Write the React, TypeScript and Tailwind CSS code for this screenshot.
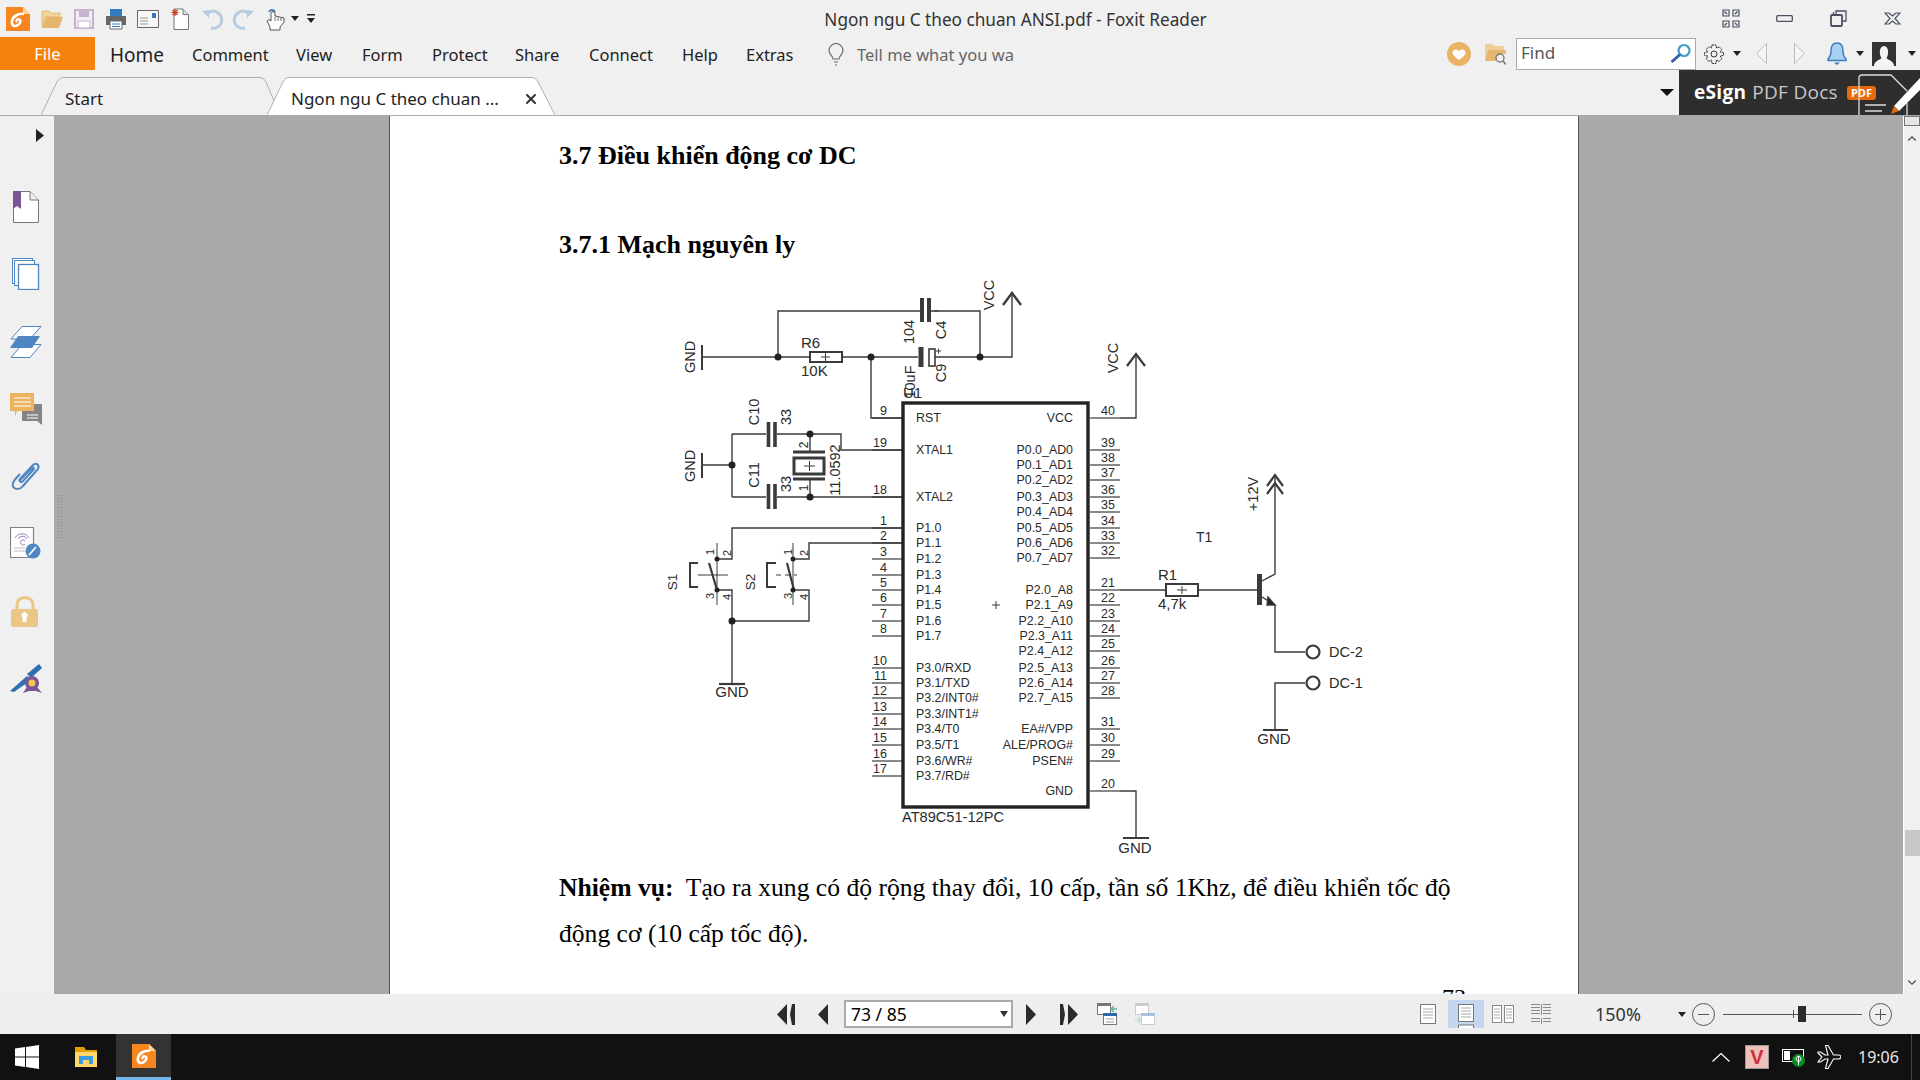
import { X } from "lucide-react";

type IconProps = { className?: string };

const leftPins: [string, string, number][] = [
  ["RST", "9", 418], ["XTAL1", "19", 450], ["XTAL2", "18", 497],
  ["P1.0", "1", 528], ["P1.1", "2", 543], ["P1.2", "3", 559], ["P1.3", "4", 575],
  ["P1.4", "5", 590], ["P1.5", "6", 605], ["P1.6", "7", 621], ["P1.7", "8", 636],
  ["P3.0/RXD", "10", 668], ["P3.1/TXD", "11", 683], ["P3.2/INT0#", "12", 698], ["P3.3/INT1#", "13", 714],
  ["P3.4/T0", "14", 729], ["P3.5/T1", "15", 745], ["P3.6/WR#", "16", 761], ["P3.7/RD#", "17", 776],
];

const rightPins: [string, string, number][] = [
  ["VCC", "40", 418],
  ["P0.0_AD0", "39", 450], ["P0.1_AD1", "38", 465], ["P0.2_AD2", "37", 480], ["P0.3_AD3", "36", 497],
  ["P0.4_AD4", "35", 512], ["P0.5_AD5", "34", 528], ["P0.6_AD6", "33", 543], ["P0.7_AD7", "32", 558],
  ["P2.0_A8", "21", 590], ["P2.1_A9", "22", 605], ["P2.2_A10", "23", 621], ["P2.3_A11", "24", 636],
  ["P2.4_A12", "25", 651], ["P2.5_A13", "26", 668], ["P2.6_A14", "27", 683], ["P2.7_A15", "28", 698],
  ["EA#/VPP", "31", 729], ["ALE/PROG#", "30", 745], ["PSEN#", "29", 761], ["GND", "20", 791],
];

function Rot({ x, y, size = 13, children }: { x: number; y: number; size?: number; children: string }) {
  return (
    <text transform={`translate(${x} ${y}) rotate(-90)`} y={4.5} textAnchor="middle" fontSize={size} fill="#2a2a2a" stroke="none">
      {children}
    </text>
  );
}

function Label({ x, y, size = 13, anchor = "start", children }: { x: number; y: number; size?: number; anchor?: "start" | "middle" | "end"; children: string }) {
  return (
    <text x={x} y={y} textAnchor={anchor} fontSize={size} fill="#2a2a2a" stroke="none">
      {children}
    </text>
  );
}

function Schematic() {
  return (
    <svg viewBox="390 270 1188 590" className="block w-[1188px] h-[590px] [font-family:'Liberation_Sans',Arial,sans-serif]" fill="none" stroke="#3a3a3a" strokeWidth={1.4}>
      {/* reset network */}
      <path d="M702 357H810M842 357H918M935 357H1012V294M778 357V311H920M931 311H980V357M871 357V418H902" />
      <path d="M702 345V370" strokeWidth={2} />
      <path d="M1003 305L1012 293L1021 305" strokeWidth={2.4} />
      <rect x={810} y={352} width={32} height={10} fill="#fff" strokeWidth={2} />
      <path d="M821 357h9M825.5 353v8" strokeWidth={1} />
      <path d="M922 298V322M929 298V322" strokeWidth={4} />
      <path d="M921 347V367" strokeWidth={5} />
      <rect x={929} y={349} width={6} height={17} fill="#fff" strokeWidth={1.6} />
      <path d="M936 351h5M938.5 348.5v5M934 311h5" strokeWidth={1} />
      <circle cx={778} cy={357} r={3.5} fill="#222" stroke="none" />
      <circle cx={871} cy={357} r={3.5} fill="#222" stroke="none" />
      <circle cx={980} cy={357} r={3.5} fill="#222" stroke="none" />

      {/* crystal network */}
      <path d="M702 465H732M732 434V497M732 434H766M777 434H841V450H902M732 497H766M777 497H902M810 434V452M810 479V497" />
      <path d="M702 453V478" strokeWidth={2} />
      <path d="M768.5 422V447M775 422V447M768.5 484V509M775 484V509" strokeWidth={3.6} />
      <path d="M793 452H825M793 479H825" strokeWidth={3} />
      <rect x={794} y={458} width={30} height={16} fill="#fff" strokeWidth={3} />
      <path d="M804 466h11M809.5 461v10" strokeWidth={1} />
      <circle cx={732} cy={465} r={3.5} fill="#222" stroke="none" />
      <circle cx={810} cy={434} r={3.5} fill="#222" stroke="none" />
      <circle cx={810} cy={497} r={3.5} fill="#222" stroke="none" />

      {/* switches */}
      <path d="M902 528H732V559H717M902 543H809V559H793M717 590H732V683M793 590H809V621H732" />
      <path d="M717 543V605M793 543V605" strokeWidth={1} />
      <path d="M709 563L717 590M787 563L794 590" strokeWidth={2.2} />
      <path d="M698 563H690V587H698M776 563H767V587H776" strokeWidth={2} />
      <path d="M698 575H728" strokeWidth={1} />
      <path d="M776 575H797" strokeWidth={1} strokeDasharray="5 4" />
      <circle cx={717} cy={559} r={2.5} fill="#222" stroke="none" />
      <circle cx={717} cy={590} r={2.5} fill="#222" stroke="none" />
      <circle cx={793} cy={559} r={2.5} fill="#222" stroke="none" />
      <circle cx={793} cy={590} r={2.5} fill="#222" stroke="none" />
      <circle cx={732} cy={621} r={3.5} fill="#222" stroke="none" />
      <path d="M719 684H745" strokeWidth={2.2} />

      {/* chip and pins */}
      <rect x={903} y={403} width={185} height={404} strokeWidth={3.4} fill="#fff" stroke="#222" />
      {leftPins.map(([name, num, y]) => (
        <g key={num}>
          <path d={`M872 ${y}H902`} strokeWidth={1.2} />
          <Label x={916} y={y + 4} size={12.4}>{name}</Label>
          <Label x={887} y={y - 3} size={12.5} anchor="end">{num}</Label>
        </g>
      ))}
      {rightPins.map(([name, num, y]) => (
        <g key={num}>
          <path d={`M1090 ${y}H1120`} strokeWidth={1.2} />
          <Label x={1073} y={y + 4} size={12.4} anchor="end">{name}</Label>
          <Label x={1108} y={y - 3} size={12.5} anchor="middle">{num}</Label>
        </g>
      ))}
      <path d="M992 605h8M996 601v8" strokeWidth={1} />
      <path d="M1120 418H1136V354M1120 791H1136V838M1120 590H1166M1198 590H1257" />
      <path d="M1127 366L1136 354L1145 366M1123 838H1149M1263 730H1288" strokeWidth={2.2} />

      {/* driver stage */}
      <rect x={1166} y={584} width={32} height={12} fill="#fff" strokeWidth={2} />
      <path d="M1177 590h10M1182 586v8" strokeWidth={1} />
      <path d="M1259.5 574V605" strokeWidth={5} />
      <path d="M1262 581L1275 574V474M1262 597L1275 605V652H1305M1305 683H1275V730" />
      <path d="M1267 486L1275 475L1283 486M1267 494L1275 483L1283 494" strokeWidth={2.2} />
      <path d="M1268 597L1275 605H1267Z" fill="#222" />
      <circle cx={1313} cy={652} r={6.5} strokeWidth={2.2} fill="#fff" />
      <circle cx={1313} cy={683} r={6.5} strokeWidth={2.2} fill="#fff" />

      {/* labels */}
      <Rot x={690} y={357} size={14.5}>GND</Rot>
      <Rot x={690} y={466} size={14.5}>GND</Rot>
      <Label x={801} y={348} size={15}>R6</Label>
      <Label x={801} y={376} size={15}>10K</Label>
      <Rot x={909} y={332} size={14.5}>104</Rot>
      <Rot x={941} y={330} size={14.5}>C4</Rot>
      <Rot x={941} y={373} size={14.5}>C9</Rot>
      <Rot x={910} y={382} size={14.5}>10uF</Rot>
      <Label x={903} y={398} size={15}>U1</Label>
      <Rot x={989} y={295} size={14.5}>VCC</Rot>
      <Rot x={1113} y={358} size={14.5}>VCC</Rot>
      <Rot x={754} y={412} size={14.5}>C10</Rot>
      <Rot x={786} y={417} size={14.5}>33</Rot>
      <Rot x={754} y={475} size={14.5}>C11</Rot>
      <Rot x={786} y={484} size={14.5}>33</Rot>
      <Rot x={835} y={470} size={14.5}>11.0592</Rot>
      <Rot x={803} y={445} size={12}>2</Rot>
      <Rot x={803} y={488} size={12}>1</Rot>
      <Rot x={672} y={582} size={13.5}>S1</Rot>
      <Rot x={750} y={582} size={13.5}>S2</Rot>
      <Rot x={709} y={552} size={11}>1</Rot>
      <Rot x={726} y={553} size={11}>2</Rot>
      <Rot x={709} y={596} size={11}>3</Rot>
      <Rot x={726} y={597} size={11}>4</Rot>
      <Rot x={787} y={552} size={11}>1</Rot>
      <Rot x={803} y={553} size={11}>2</Rot>
      <Rot x={787} y={596} size={11}>3</Rot>
      <Rot x={803} y={597} size={11}>4</Rot>
      <Label x={732} y={697} size={15} anchor="middle">GND</Label>
      <Label x={1135} y={853} size={15} anchor="middle">GND</Label>
      <Label x={1274} y={744} size={15} anchor="middle">GND</Label>
      <Label x={902} y={822} size={14.6}>AT89C51-12PC</Label>
      <Rot x={1253} y={494} size={14.5}>+12V</Rot>
      <Label x={1196} y={542} size={14}>T1</Label>
      <Label x={1158} y={580} size={15}>R1</Label>
      <Label x={1158} y={609} size={15}>4,7k</Label>
      <Label x={1329} y={657} size={14.5}>DC-2</Label>
      <Label x={1329} y={688} size={14.5}>DC-1</Label>
    </svg>
  );
}

function Caret({ className = "" }: IconProps) {
  return (
    <svg viewBox="0 0 8 5" className={className}>
      <path d="M0 0H8L4 5Z" fill="#222" />
    </svg>
  );
}

function FoxitLogo({ className = "" }: IconProps) {
  return (
    <svg viewBox="0 0 24 24" className={className}>
      <path d="M0 0H17L24 7V24H0Z" fill="#f6861f" />
      <path d="M17 0L24 7H17Z" fill="#fbd3a0" />
      <path d="M18 7C13 6 7 9 6 14C5 19 9 20 12 18C15 16 15 13 13 12.5C11 12 10 14 11 15" fill="none" stroke="#fff" strokeWidth={2.6} />
    </svg>
  );
}

function FolderIcon({ className = "" }: IconProps) {
  return (
    <svg viewBox="0 0 22 20" className={className}>
      <path d="M1 2H8L10 4H19V8H4L1 18Z" fill="#f2d49b" stroke="#dfb36a" strokeWidth={0.8} />
      <path d="M5 8H22L18 19H1Z" fill="#e6b66c" />
    </svg>
  );
}

function TopLeftIcons() {
  return (
    <div className="flex items-center">
      <FoxitLogo className="ml-[6px] w-[24px] h-[24px]" />
      <FolderIcon className="ml-[11px] w-[22px] h-[20px]" />
      <svg viewBox="0 0 20 20" className="ml-[11px] w-[20px] h-[20px]">
        <path d="M1 1H19V19H1Z" fill="#f3edf6" stroke="#c5b3d0" strokeWidth={2} />
        <path d="M5 1H15V8H5Z" fill="#c5b3d0" />
        <path d="M4 12H16V19H4Z" fill="#fff" stroke="#c5b3d0" />
      </svg>
      <svg viewBox="0 0 22 22" className="ml-[11px] w-[22px] h-[22px]">
        <path d="M5 1H17V8H5Z" fill="#2f7cc0" />
        <path d="M1 8H21V17H1Z" fill="#666" />
        <path d="M5 13H17V21H5Z" fill="#fff" stroke="#666" />
        <path d="M7 16H15M7 18.5H15" stroke="#2f7cc0" />
      </svg>
      <svg viewBox="0 0 22 20" className="ml-[10px] w-[22px] h-[20px]">
        <path d="M.5 1.5H21.5V18.5H.5Z" fill="#f7f7f7" stroke="#666" />
        <path d="M15 4H19V9H15Z" fill="#3b78b8" />
        <path d="M3 9H11M3 12H11M3 15H11" stroke="#999" />
      </svg>
      <svg viewBox="0 0 18 22" className="ml-[12px] w-[18px] h-[22px]">
        <path d="M3 1H12L17.5 6.5V21.5H3Z" fill="#fff" stroke="#777" />
        <path d="M12 1V6.5H17.5" fill="#ddd" stroke="#777" />
        <path d="M4 1V8M.5 4.5H7.5M1.5 2L6.5 7M6.5 2L1.5 7" stroke="#d2402a" strokeWidth={1.2} />
      </svg>
      <svg viewBox="0 0 23 22" className="ml-[12px] w-[23px] h-[22px]" fill="none">
        <path d="M6 6A8.5 8.5 0 1 1 10 20" stroke="#b6cbe0" strokeWidth={3} />
        <path d="M1 3L8 2V10Z" fill="#b6cbe0" />
      </svg>
      <svg viewBox="0 0 23 22" className="ml-[8px] w-[23px] h-[22px]" fill="none">
        <path d="M17 6A8.5 8.5 0 1 0 13 20" stroke="#b6cbe0" strokeWidth={3} />
        <path d="M22 3L15 2V10Z" fill="#b6cbe0" />
      </svg>
      <svg viewBox="0 0 20 24" className="ml-[11px] w-[20px] h-[24px]" fill="none">
        <path d="M3 5A3.2 3.2 0 0 1 9 5" stroke="#2f6fb0" strokeWidth={1.6} />
        <path d="M5 6V14L3 12.5L1 14L4 20V23H14V20L18 15V11L9 9V6C9 4.5 5 4.5 5 6Z" fill="#fff" stroke="#444" strokeWidth={0.9} />
        <path d="M9 10V14M12 10.5V14M15 11V14" stroke="#444" strokeWidth={0.8} />
      </svg>
      <Caret className="ml-[5px] w-[8px] h-[5px]" />
      <svg viewBox="0 0 8 9" className="ml-[8px] w-[8px] h-[9px]">
        <path d="M0 0H8V1.5H0ZM0 4H8L4 9Z" fill="#222" />
      </svg>
    </div>
  );
}

function WindowButtons() {
  return (
    <div className="flex items-center pr-[19px]">
      <svg viewBox="0 0 18 19" className="w-[18px] h-[19px]" fill="none" stroke="#4a5160" strokeWidth={1.2}>
        <path d="M1 1H7V7H1ZM11 1H17V7H11ZM1 12H7V18H1ZM11 12H17V18H11Z" />
        <path d="M2.5 2.5L5 5M15.5 2.5L13 5M2.5 16.5L5 14M15.5 16.5L13 14" strokeWidth={1.4} />
      </svg>
      <svg viewBox="0 0 17 7" className="ml-[36px] w-[17px] h-[7px]" fill="none" stroke="#4a5160" strokeWidth={1.3}>
        <rect x={0.7} y={0.7} width={15.6} height={5.6} rx={1} />
      </svg>
      <svg viewBox="0 0 17 17" className="ml-[37px] w-[17px] h-[17px]" fill="none" stroke="#4a5160" strokeWidth={1.3}>
        <path d="M6 4V1H16V11H13" />
        <path d="M3.5 4V2" />
        <rect x={1} y={5} width={11} height={11} rx={1} strokeWidth={1.8} />
      </svg>
      <svg viewBox="0 0 17 13" className="ml-[37px] w-[17px] h-[13px]" fill="none" stroke="#4a5160" strokeWidth={1.2}>
        <path d="M1 1H5L8.5 4L12 1H16L11 6.5L16 12H12L8.5 9L5 12H1L6 6.5Z" />
      </svg>
    </div>
  );
}

function MenuRight() {
  return (
    <div className="flex items-center">
      <svg viewBox="0 0 24 24" className="w-[24px] h-[24px]">
        <circle cx={12} cy={12} r={12} fill="#e9b264" />
        <path d="M12 18C8 15 5.5 13 5.5 10.5C5.5 7 10 6.5 12 9C14 6.5 18.5 7 18.5 10.5C18.5 13 16 15 12 18Z" fill="#fff" />
      </svg>
      <svg viewBox="0 0 21 22" className="ml-[14px] w-[21px] h-[22px]" fill="none">
        <path d="M0 1H7L9 3H19V7H3L0 16Z" fill="#efcf98" />
        <path d="M3 7H21V11C15 9 11 13 11 18H0Z" fill="#e6b66c" />
        <circle cx={15} cy={15} r={4} stroke="#777" strokeWidth={1.3} />
        <path d="M18 18L21 21.5" stroke="#777" strokeWidth={1.6} />
      </svg>
      <div className="ml-[10px] w-[180px] h-[32px] flex items-center justify-between bg-white border border-[#aaaaaa] pl-[4px] pr-[3px] pb-[2px] text-[17px] text-[#555]">
        <span>Find</span>
        <svg viewBox="0 0 22 20" className="w-[22px] h-[20px]" fill="none">
          <circle cx={14} cy={7.5} r={5.5} stroke="#3d9ec9" strokeWidth={2.2} />
          <path d="M10 11.5L1.5 19" stroke="#2f5f9e" strokeWidth={2.8} />
        </svg>
      </div>
      <svg viewBox="0 0 20 20" className="ml-[8px] w-[20px] h-[20px]" fill="none" stroke="#333" strokeWidth={1}>
        <path d="M8 1H12L12.6 4L15.2 2.8L17.8 5.5L16.2 8L19.5 8.5V11.5L16.2 12L17.8 14.8L15 17.5L12.5 16L12 19.5H8L7.5 16L5 17.5L2.2 14.8L3.8 12L.5 11.5V8.5L3.8 8L2.2 5.5L4.8 2.8L7.4 4Z" strokeDasharray="2 .6" />
        <circle cx={10} cy={10} r={3} />
      </svg>
      <Caret className="ml-[9px] w-[8px] h-[5px]" />
      <svg viewBox="0 0 11 21" className="ml-[15px] w-[11px] h-[21px]" fill="#f4f4f4" stroke="#bdbdbd">
        <path d="M10.5 .5V20.5L.5 10.5Z" />
      </svg>
      <svg viewBox="0 0 11 21" className="ml-[27px] w-[11px] h-[21px]" fill="#f4f4f4" stroke="#bdbdbd">
        <path d="M.5 .5V20.5L10.5 10.5Z" />
      </svg>
      <svg viewBox="0 0 20 23" className="ml-[22px] w-[20px] h-[23px]">
        <path d="M10 1C5.5 1 4 5 4 9C4 13 3 15 1 17V18.5H19V17C17 15 16 13 16 9C16 5 14.5 1 10 1Z" fill="#a9d0f0" stroke="#3a7cc0" strokeWidth={1.4} />
        <path d="M7 20.5H13L10 23Z" fill="#3a7cc0" />
      </svg>
      <Caret className="ml-[9px] w-[8px] h-[5px]" />
      <svg viewBox="0 0 24 24" className="ml-[8px] w-[24px] h-[24px]">
        <rect width={24} height={24} fill="#333" />
        <path d="M2 24C2 19 8 18 9.5 16C7 13 7 4 12 4C17 4 17 13 14.5 16C16 18 22 19 22 24Z" fill="#f4f4f4" />
      </svg>
      <Caret className="ml-[12px] mr-[4px] w-[8px] h-[5px]" />
    </div>
  );
}

function Tabs() {
  return (
    <div className="flex items-end h-full text-[17px]">
      <div className="relative ml-[41px] w-[233px] h-[38px] flex items-center pl-[24px] pt-[5px] text-[#222]">
        <svg viewBox="0 0 233 38" className="absolute inset-0 w-full h-full" fill="none" stroke="#b0b0b0">
          <path d="M0 38L16 5Q18 .5 23 .5H219Q223 .5 225 5L233 24" />
        </svg>
        <span className="relative">Start</span>
      </div>
      <div className="relative -ml-[7px] w-[288px] h-[38px] flex items-center pl-[24px] pt-[5px] text-[#222]">
        <svg viewBox="0 0 288 38" className="absolute inset-0 w-full h-full" fill="#ffffff" stroke="#b0b0b0">
          <path d="M0 38L16 5Q18 .5 23 .5H264Q269 .5 271 5L288 38" />
        </svg>
        <span className="relative">Ngon ngu C theo chuan ...</span>
        <X className="absolute left-[256px] top-[14px] w-[16px] h-[16px]" strokeWidth={3} color="#333" />
      </div>
    </div>
  );
}

function ESignBanner() {
  return (
    <div className="relative w-[241px] h-full bg-[#2e2e2e] flex items-center pl-[15px] text-[19px] [font-family:'Open_Sans',sans-serif] tracking-[.3px] overflow-hidden">
      <span className="font-bold text-white">eSign</span>
      <span className="ml-[6px] text-[#c8c8c8]">PDF Docs</span>
      <span className="ml-[9px] w-[29px] h-[14px] rounded-[3px] bg-[#ea6a0a] text-white text-[11px] leading-[14px] text-center font-bold tracking-normal">PDF</span>
      <svg viewBox="0 0 62 45" className="absolute right-0 top-0 w-[62px] h-[45px]" fill="none">
        <path d="M1 45V8Q1 5 4 5H33L49 21" stroke="#ddd" strokeWidth={1.3} />
        <path d="M49 33V45" stroke="#ddd" strokeWidth={1.3} />
        <path d="M7 35H28M7 41H24" stroke="#ddd" strokeWidth={1.6} />
        <path d="M62 8L36 36L41 41L62 20Z" fill="#fff" />
        <path d="M36 36L33 44L41 41Z" fill="#e86a10" />
      </svg>
    </div>
  );
}

function Sidebar() {
  return (
    <div className="w-[54px] shrink-0 bg-[#f0f0f0] flex flex-col">
      <svg viewBox="0 0 8 13" className="ml-[36px] mt-[13px] w-[8px] h-[13px]">
        <path d="M0 0L8 6.5L0 13Z" fill="#222" />
      </svg>
      <div className="mt-[49px] pl-[10px] flex flex-col gap-[35.3px]">
        <svg viewBox="0 0 32 32" className="w-[32px] h-[32px]">
          <path d="M3.5 .5H20L28.5 9V31.5H3.5Z" fill="#fff" stroke="#777" />
          <path d="M20 .5V9H28.5" fill="#eee" stroke="#777" />
          <path d="M3 0H11V18L7 15L3 18Z" fill="#7a5596" />
        </svg>
        <svg viewBox="0 0 32 32" className="w-[32px] h-[32px]" fill="#fff" stroke="#4d86c0">
          <rect x={2.5} y={.5} width={20} height={25} />
          <rect x={4.5} y={2.5} width={20} height={25} />
          <rect x={8.5} y={6.5} width={20} height={25} strokeWidth={1.3} />
        </svg>
        <svg viewBox="0 0 32 32" className="w-[32px] h-[32px]">
          <path d="M12 .5H31L20 13H1Z" fill="#fff" stroke="#4d86c0" />
          <path d="M12 18.5H31L20 31.5H1Z" fill="#fff" stroke="#4d86c0" />
          <path d="M8 10H30L22 22H0Z" fill="#4d86c0" />
        </svg>
        <svg viewBox="0 0 32 32" className="w-[32px] h-[32px]">
          <path d="M12 11H32V27V32L27 28H12Z" fill="#858585" />
          <path d="M0 0H24V18H7L5 24V18H0Z" fill="#edb25e" />
          <path d="M4 5H21M4 9H21M4 13H21" stroke="#fff" />
          <path d="M17 22H28M17 25H28" stroke="#fff" />
        </svg>
        <svg viewBox="0 0 32 32" className="w-[32px] h-[32px]" fill="none" stroke="#4d86c0" strokeWidth={2}>
          <path d="M9 21L21 9C23 7 24 7 24 9L13 21C11 23 8 21 10 19L23 5C26 2 30 5 28 9L13 26C9 31 1 29 3 23C4 20 7 17 10 14" />
        </svg>
        <svg viewBox="0 0 32 32" className="w-[32px] h-[32px]">
          <path d="M.5 .5H23.5V30.5H.5Z" fill="#fff" stroke="#808080" strokeWidth={1.2} />
          <path d="M5 11A8 8 0 0 1 19 11M8 12A5 5 0 0 1 17 12M15 14A2.5 2.5 0 1 0 15 17" fill="none" stroke="#a27fbd" />
          <path d="M4 21H15M4 24H15" stroke="#bbb" />
          <circle cx={23} cy={24} r={7.5} fill="#4d86c0" />
          <path d="M19 28L26 20" stroke="#fff" strokeWidth={1.6} />
        </svg>
        <svg viewBox="0 0 32 32" className="w-[32px] h-[32px]">
          <path d="M7 15V10C7 0 23 0 23 10V15" fill="none" stroke="#ebc787" strokeWidth={3} />
          <rect x={1} y={14} width={27} height={18} rx={2} fill="#ebc787" />
          <path d="M12.5 27V22.5A3 3 0 1 1 16.5 22.5V27Z" fill="#fff" />
        </svg>
        <svg viewBox="0 0 32 32" className="w-[32px] h-[32px]">
          <path d="M0 29L17 14L21 18L4 30Z" fill="#2f6fb0" />
          <path d="M17 12L29 2L32 6L21 16Z" fill="#2f6fb0" />
          <path d="M13 31L17 25H27L32 31L26 29H19Z" fill="#7a5596" />
          <circle cx={22} cy={21} r={7} fill="#7a5596" />
          <circle cx={22} cy={21} r={3.5} fill="#f1c84b" />
        </svg>
      </div>
    </div>
  );
}

function Splitter() {
  return (
    <svg viewBox="0 0 5 44" className="ml-[4px] mt-[379px] w-[5px] h-[44px]">
      <path d="M.5 0V44M4 0V44" stroke="#808080" strokeDasharray="1 2" />
    </svg>
  );
}

function PageView() {
  return (
    <div className="w-[1190px] h-full shrink-0 bg-white border-x border-[#555] overflow-hidden [font-family:'Liberation_Serif','Times_New_Roman',serif] text-black">
      <h2 className="pl-[169px] pt-[25px] h-[65px] text-[26px] leading-[30px] font-bold">3.7 Điều khiển động cơ DC</h2>
      <h2 className="pl-[169px] pt-[49px] h-[89px] text-[26px] leading-[30px] font-bold">3.7.1 Mạch nguyên ly</h2>
      <Schematic />
      <div className="pl-[169px] mt-[5px] text-[25.6px] leading-[46px] whitespace-nowrap">
        <p><b>Nhiệm vụ:</b>&nbsp; Tạo ra xung có độ rộng thay đổi, 10 cấp, tần số 1Khz, để điều khiển tốc độ</p>
        <p>động cơ (10 cấp tốc độ).</p>
      </div>
      <p className="pl-[1052px] mt-[25px] text-[24px] leading-[30px]">73</p>
    </div>
  );
}

function Scrollbar() {
  return (
    <div className="w-[17px] h-full shrink-0 bg-[#f0f0f0] border-l border-white flex flex-col items-center">
      <div className="w-full h-[10px] bg-[#e6e6e6] border border-[#777]" />
      <svg viewBox="0 0 8 5" className="mt-[10px] w-[8px] h-[5px]" fill="none" stroke="#666" strokeWidth={1.6}>
        <path d="M0 4.5L4 1L8 4.5" />
      </svg>
      <div className="mt-[689px] w-[15px] h-[26px] bg-[#c8c8c8]" />
      <svg viewBox="0 0 8 5" className="mt-[124px] w-[8px] h-[5px]" fill="none" stroke="#666" strokeWidth={1.6}>
        <path d="M0 .5L4 4L8 .5" />
      </svg>
    </div>
  );
}

function DocIcon({ className = "" }: IconProps) {
  return (
    <svg viewBox="0 0 16 20" className={className} fill="#fff" stroke="#777">
      <rect x={0.5} y={0.5} width={15} height={19} />
      <path d="M3 5H13M3 8H13M3 11H13M3 14H13" stroke="#aaa" />
    </svg>
  );
}

function PageNav() {
  return (
    <div className="flex items-center ml-[777px]">
      <svg viewBox="0 0 18 21" className="w-[18px] h-[21px]" fill="#2b2b2b">
        <path d="M10 0V21L0 10.5ZM15 0H18V21H15L13 10.5Z" />
      </svg>
      <svg viewBox="0 0 10 21" className="ml-[23px] w-[10px] h-[21px]" fill="#2b2b2b">
        <path d="M10 0V21L0 10.5Z" />
      </svg>
      <div className="ml-[16px] w-[169px] h-[28px] bg-white border-2 border-[#aaaaaa] flex items-center justify-between pl-[5px] pr-[3px] text-[17.5px] text-black">
        <span>73 / 85</span>
        <svg viewBox="0 0 8 6" className="w-[8px] h-[6px]"><path d="M0 0H8L4 6Z" fill="#333" /></svg>
      </div>
      <svg viewBox="0 0 10 21" className="ml-[13px] w-[10px] h-[21px]" fill="#2b2b2b">
        <path d="M0 0V21L10 10.5Z" />
      </svg>
      <svg viewBox="0 0 18 21" className="ml-[24px] w-[18px] h-[21px]" fill="#2b2b2b">
        <path d="M8 0V21L18 10.5ZM3 0H0V21H3L5 10.5Z" />
      </svg>
      <svg viewBox="0 0 20 22" className="ml-[19px] w-[20px] h-[22px]">
        <rect x={0.5} y={0.5} width={13} height={11} fill="#fff" stroke="#777" />
        <path d="M0 0H14V3H0Z" fill="#777" />
        <path d="M14 6H20M17 3L14 6L17 9" fill="none" stroke="#6fb3a3" strokeWidth={1.5} />
        <rect x={6.5} y={10.5} width={13} height={11} fill="#fff" stroke="#777" />
        <path d="M6 10H20V13H6Z" fill="#2f6aa8" />
        <path d="M9 16H17M9 19H17" stroke="#999" />
      </svg>
      <svg viewBox="0 0 20 22" className="ml-[18px] w-[20px] h-[22px]">
        <rect x={0.5} y={0.5} width={13} height={11} fill="#fff" stroke="#ccc" />
        <path d="M0 0H14V3H0Z" fill="#ccc" />
        <rect x={6.5} y={10.5} width={13} height={11} fill="#fff" stroke="#ccc" />
        <path d="M6 10H20V13H6Z" fill="#a8c2de" />
        <path d="M0 17H6M3 14L6 17L3 20" fill="none" stroke="#c0ddd5" strokeWidth={1.5} />
      </svg>
    </div>
  );
}

function ViewControls() {
  return (
    <div className="flex items-center pr-[28px]">
      <DocIcon className="w-[16px] h-[20px]" />
      <div className="ml-[12px] w-[36px] h-[28px] bg-[#c5d7f0] flex justify-center items-start pt-[4px] overflow-hidden">
        <svg viewBox="0 0 16 28" className="w-[16px] h-[28px]" fill="#fff" stroke="#777">
          <rect x={0.5} y={0.5} width={15} height={17} />
          <path d="M3 4H13M3 7H13M3 10H13M3 13H13" stroke="#aaa" />
          <rect x={0.5} y={21} width={15} height={10} />
        </svg>
      </div>
      <svg viewBox="0 0 22 18" className="ml-[8px] w-[22px] h-[18px]" fill="#fff" stroke="#888">
        <rect x={0.5} y={0.5} width={9} height={17} />
        <rect x={12.5} y={0.5} width={9} height={17} />
        <path d="M2 4H8M2 7H8M2 10H8M2 13H8M14 4H20M14 7H20M14 10H20M14 13H20" stroke="#aaa" />
      </svg>
      <svg viewBox="0 0 20 20" className="ml-[17px] w-[20px] h-[20px]" fill="none" stroke="#888">
        <path d="M0 .5H9M0 3.5H9M0 6.5H9M0 9.5H9M12 .5H20M12 3.5H20M12 6.5H20M12 9.5H20M0 14.5H9M0 17.5H9M12 14.5H20M12 17.5H20M10.5 0V11M10.5 14V20" />
      </svg>
      <span className="ml-[44px] w-[83px] text-[18px] text-[#333]">150%</span>
      <Caret className="w-[8px] h-[5px]" />
      <svg viewBox="0 0 23 23" className="ml-[6px] w-[23px] h-[23px]" fill="none" stroke="#555">
        <circle cx={11.5} cy={11.5} r={11} />
        <path d="M6 11.5H17" />
      </svg>
      <div className="ml-[8px] w-[139px] h-[16px] flex items-center relative">
        <div className="w-full h-[1px] bg-[#555]" />
        <div className="absolute left-[70px] top-[4px] w-[1px] h-[8px] bg-[#555]" />
        <div className="absolute left-[75px] top-0 w-[8px] h-[16px] bg-[#2b2b2b]" />
      </div>
      <svg viewBox="0 0 23 23" className="ml-[7px] w-[23px] h-[23px]" fill="none" stroke="#555">
        <circle cx={11.5} cy={11.5} r={11} />
        <path d="M6 11.5H17M11.5 6V17" />
      </svg>
    </div>
  );
}

function Taskbar() {
  return (
    <div className="h-[46px] shrink-0 bg-[#111111] flex items-center text-white">
      <svg viewBox="0 0 24 24" className="ml-[15px] w-[24px] h-[24px]" fill="#fff">
        <path d="M0 3.5L10 2V11.5H0ZM11 1.9L24 0V11.5H11ZM0 12.5H10V22L0 20.5ZM11 12.5H24V24L11 22.1Z" />
      </svg>
      <svg viewBox="0 0 22 20" className="ml-[36px] w-[22px] h-[20px]">
        <path d="M0 0H9L11 3H22V19H0Z" fill="#e0a100" />
        <path d="M0 5H22V20H0Z" fill="#ffd76a" />
        <path d="M4 9H18V17H14V13H8V17H4Z" fill="#3d9be0" />
      </svg>
      <div className="ml-[19px] w-[55px] h-full bg-[#333333] border-b-[3px] border-[#76b5e8] flex justify-center items-center">
        <FoxitLogo className="w-[24px] h-[24px]" />
      </div>
      <div className="flex-1" />
      <svg viewBox="0 0 18 9" className="w-[18px] h-[9px]" fill="none" stroke="#fff" strokeWidth={1.2}>
        <path d="M.5 8.5L9 .5L17.5 8.5" />
      </svg>
      <div className="ml-[15px] w-[24px] h-[24px] bg-[#efc0bc] border border-[#999] flex items-center justify-center">
        <span className="text-[20px] font-bold leading-none text-[#d0303a] [font-family:'Liberation_Sans',sans-serif]">V</span>
      </div>
      <svg viewBox="0 0 24 20" className="ml-[13px] w-[24px] h-[20px]">
        <rect x={0.5} y={2.5} width={21} height={12} fill="none" stroke="#fff" />
        <rect x={2} y={4} width={6} height={9} fill="#fff" />
        <circle cx={16.5} cy={13.5} r={6.5} fill="#0a8a20" />
        <path d="M16.5 9V18M14 12C14 15 19 15 19 12C19 10 17 9.5 16.5 9C16 9.5 14 10 14 12Z" fill="none" stroke="#fff" />
      </svg>
      <svg viewBox="0 0 24 24" className="ml-[11px] w-[24px] h-[24px]" fill="none" stroke="#fff" strokeWidth={1.1}>
        <path d="M1 8L5 12L1 17H3.5L8 14H11L8.5 23.5H11L16.5 14H21C25 14 25 10 21 10H16.5L11 .5H8.5L11 10H8L3.5 7H1Z" />
      </svg>
      <span className="ml-[17px] w-[43px] text-[16px] text-[#e8e8e8]">19:06</span>
      <div className="ml-[10px] w-[1px] h-full bg-[#444]" />
      <div className="w-[8px]" />
    </div>
  );
}

export default function App() {
  return (
    <div className="w-[1920px] h-[1080px] flex flex-col overflow-hidden bg-[#f0f0f0] text-[16.5px] text-[#222] [font-family:'Noto_Sans','Open_Sans',sans-serif]">
      <div className="h-[37px] shrink-0 flex items-center">
        <TopLeftIcons />
        <div className="flex-1 mt-[2px] text-center text-[17.2px] text-[#333] mr-[6px]">Ngon ngu C theo chuan ANSI.pdf - Foxit Reader</div>
        <WindowButtons />
      </div>

      <div className="h-[33px] shrink-0 flex items-center">
        <div className="w-[95px] h-full bg-[#f5820a] text-white text-center leading-[33px]">File</div>
        <nav className="flex items-center ml-[15px] mt-[4px]">
          <span className="w-[82px] text-[19px]">Home</span>
          <span className="w-[104px]">Comment</span>
          <span className="w-[66px]">View</span>
          <span className="w-[70px]">Form</span>
          <span className="w-[83px]">Protect</span>
          <span className="w-[74px]">Share</span>
          <span className="w-[93px]">Connect</span>
          <span className="w-[64px]">Help</span>
          <span className="w-[72px]">Extras</span>
        </nav>
        <svg viewBox="0 0 18 24" className="ml-[9px] mt-[3px] w-[18px] h-[24px]" fill="none" stroke="#666" strokeWidth={1.1}>
          <path d="M6 16C6 13 2 11 2 7.5A7 7 0 0 1 16 7.5C16 11 12 13 12 16Z" />
          <path d="M7 19H11M8 22H10" />
        </svg>
        <span className="ml-[12px] mt-[4px] whitespace-nowrap text-[#666]">Tell me what you wa</span>
        <div className="flex-1" />
        <MenuRight />
      </div>

      <div className="h-[46px] shrink-0 flex items-center justify-between border-b border-[#aaaaaa]">
        <Tabs />
        <div className="flex items-center h-full">
          <svg viewBox="0 0 14 7" className="w-[14px] h-[7px]"><path d="M0 0H14L7 7Z" fill="#111" /></svg>
          <div className="ml-[5px] h-[45px]"><ESignBanner /></div>
        </div>
      </div>

      <div className="h-[878px] shrink-0 flex">
        <Sidebar />
        <div className="w-[335px] shrink-0 bg-[#a9a9a9]"><Splitter /></div>
        <PageView />
        <div className="w-[324px] shrink-0 bg-[#a9a9a9]" />
        <Scrollbar />
      </div>

      <div className="h-[40px] shrink-0 bg-[#eeeeee] flex items-center justify-between">
        <PageNav />
        <ViewControls />
      </div>

      <Taskbar />
    </div>
  );
}
